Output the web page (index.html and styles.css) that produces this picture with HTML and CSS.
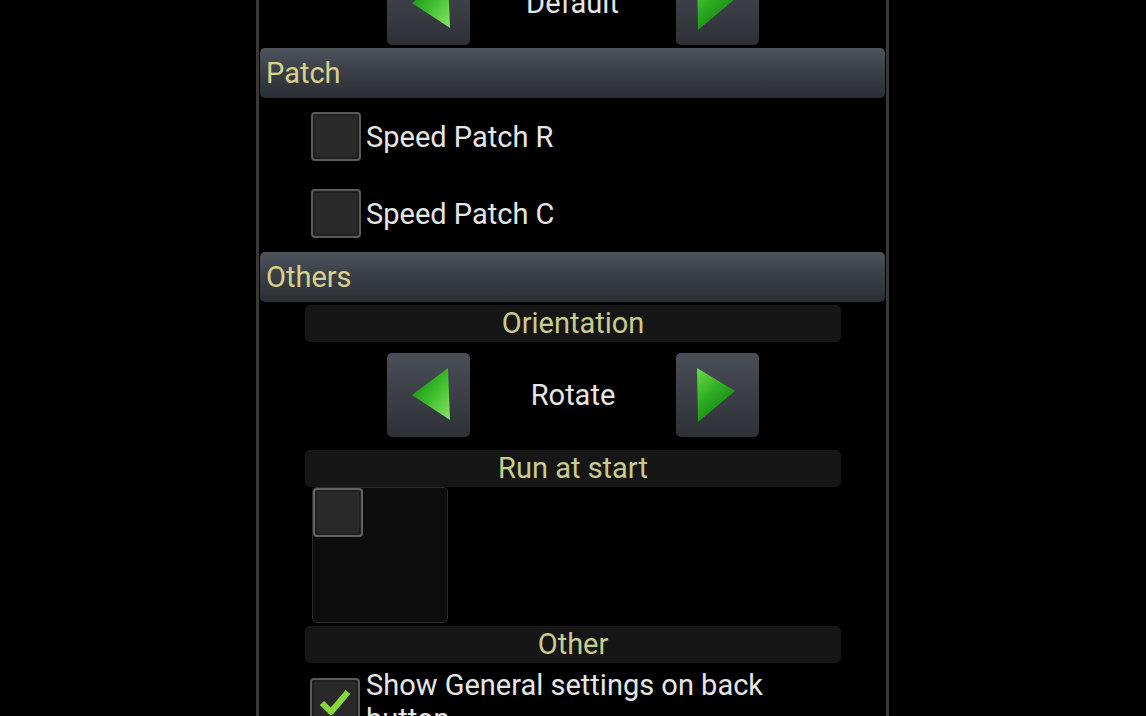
FILE: index.html
```html
<!DOCTYPE html>
<html>

<head>
  <meta charset="utf-8">
  <title>Settings</title>
  <link rel="stylesheet" href="styles.css">
</head>

<body>
  <div class="panel">

    <!-- tail of the previous section, scrolled mostly out of view -->
    <div class="chooser chooser-top">
      <button class="arrow-btn">
        <svg width="83" height="84" viewBox="0 0 83 84">
          <defs>
            <linearGradient id="gl1" x1="0" y1="0" x2="1" y2="1">
              <stop offset="0" stop-color="#0f7d12" />
              <stop offset="0.55" stop-color="#3fbf2e" />
              <stop offset="1" stop-color="#8ee86a" />
            </linearGradient>
          </defs>
          <polygon points="25,42 61,15 63,67" fill="url(#gl1)" />
        </svg>
      </button>
      <span class="chooser-value">Default</span>
      <button class="arrow-btn">
        <svg width="83" height="84" viewBox="0 0 83 84">
          <defs>
            <linearGradient id="gr1" x1="0" y1="0" x2="0.6" y2="1">
              <stop offset="0" stop-color="#6fdc4a" />
              <stop offset="0.5" stop-color="#2fae22" />
              <stop offset="1" stop-color="#128014" />
            </linearGradient>
          </defs>
          <polygon points="21,15 22,69 59,38" fill="url(#gr1)" />
        </svg>
      </button>
    </div>

    <div class="section-header">Patch</div>

    <label class="check-row">
      <span class="checkbox"></span>
      <span class="check-label">Speed Patch R</span>
    </label>
    <label class="check-row">
      <span class="checkbox"></span>
      <span class="check-label">Speed Patch C</span>
    </label>

    <div class="section-header">Others</div>

    <div class="group">
      <div class="group-title">Orientation</div>
      <div class="chooser">
        <button class="arrow-btn">
          <svg width="83" height="84" viewBox="0 0 83 84">
            <defs>
              <linearGradient id="gl2" x1="0" y1="0" x2="1" y2="1">
                <stop offset="0" stop-color="#0f7d12" />
                <stop offset="0.55" stop-color="#3fbf2e" />
                <stop offset="1" stop-color="#8ee86a" />
              </linearGradient>
            </defs>
            <polygon points="25,42 61,15 63,67" fill="url(#gl2)" />
          </svg>
        </button>
        <span class="chooser-value">Rotate</span>
        <button class="arrow-btn">
          <svg width="83" height="84" viewBox="0 0 83 84">
            <defs>
              <linearGradient id="gr2" x1="0" y1="0" x2="0.6" y2="1">
                <stop offset="0" stop-color="#6fdc4a" />
                <stop offset="0.5" stop-color="#2fae22" />
                <stop offset="1" stop-color="#128014" />
              </linearGradient>
            </defs>
            <polygon points="21,15 22,69 59,38" fill="url(#gr2)" />
          </svg>
        </button>
      </div>

      <div class="group-title">Run at start</div>
      <div class="app-box">
        <span class="checkbox"></span>
      </div>

      <div class="group-title">Other</div>
      <label class="check-row check-row-wrap">
        <span class="checkbox checked">
          <svg width="34" height="30" viewBox="0 0 34 30">
            <path d="M4 16 L13 25 L30 5" fill="none" stroke="#86d93c" stroke-width="6" stroke-linejoin="round" />
          </svg>
        </span>
        <span class="check-label">Show General settings on back button</span>
      </label>
    </div>

  </div>
</body>

</html>
```

FILE: styles.css
```css
html,
body {
  margin: 0;
  height: 100%;
  overflow: hidden;
  background: #000;
}

body {
  font-family: Roboto, "Noto Sans", sans-serif;
  font-size: 29px;
  color: #e6e6e6;
}

.panel {
  width: 625px;
  margin: 0 0 0 256px;
  border-left: 3px solid #383838;
  border-right: 3px solid #383838;
  min-height: 100%;
  padding: 0 1px;
}

.section-header {
  height: 50px;
  line-height: 50px;
  padding-left: 6px;
  color: #d9d08c;
  border-radius: 5px;
  background: linear-gradient(#4e545c, #3b4047 45%, #2a2e34);
}

.chooser {
  display: flex;
  justify-content: center;
  align-items: center;
  margin: 11px 0 13px;
}

.chooser-top {
  margin: -39px 0 3px;
}

.chooser-value {
  width: 206px;
  text-align: center;
}

.arrow-btn {
  width: 83px;
  height: 84px;
  padding: 0;
  border: none;
  border-radius: 5px;
  background: linear-gradient(#4a4e56, #2d3037);
  display: block;
}

.arrow-btn svg {
  display: block;
}

.check-row {
  display: flex;
  align-items: center;
  height: 77px;
  padding-left: 51px;
}

.checkbox {
  flex: none;
  width: 46px;
  height: 45px;
  border: 2px solid #5a5a5a;
  border-radius: 4px;
  background: #292929;
  box-shadow: inset 0 0 0 2px #202020;
  display: flex;
  align-items: center;
  justify-content: center;
}

.check-label {
  margin-left: 5px;
}

.group {
  margin: 3px 44px 0 45px;
}

.group-title {
  height: 37px;
  line-height: 37px;
  text-align: center;
  color: #c9cc8c;
  background: #161616;
  border-radius: 5px;
}

.app-box {
  width: 134px;
  height: 134px;
  margin-left: 7px;
  border: 1px solid #2c2c2c;
  border-radius: 5px;
  background: #0d0d0d;
  margin-bottom: 3px;
}

.app-box .checkbox {
  border-color: #646464;
}

.check-row-wrap {
  height: auto;
  padding: 5px 0 0 5px;
  line-height: 34px;
}

.check-row-wrap .check-label {
  margin-left: 6px;
  width: 420px;
}
```
